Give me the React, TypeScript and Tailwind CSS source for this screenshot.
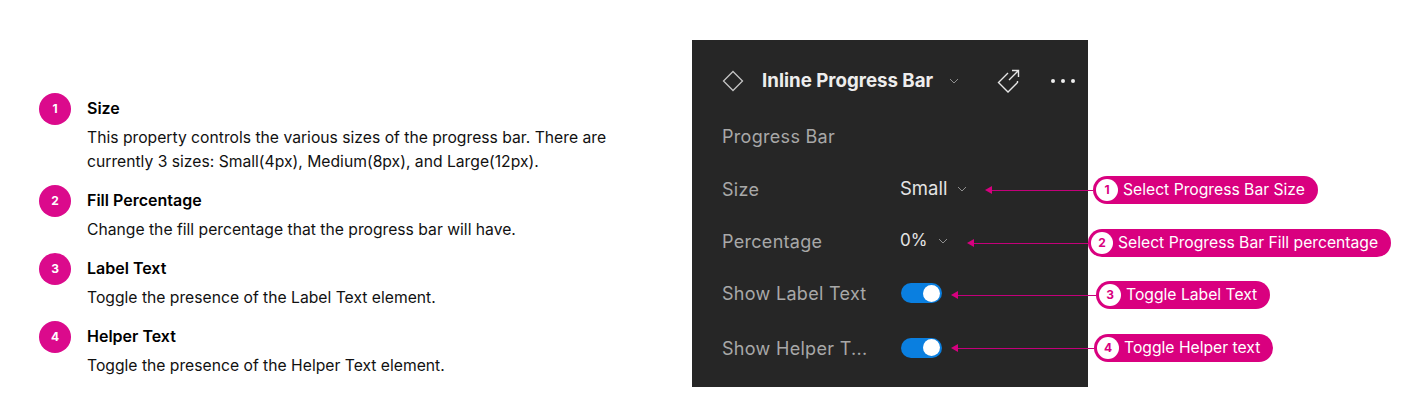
import React from "react";

const docs = [
  { n: 1, title: "Size", lines: ["This property controls the various sizes of the progress bar. There are", "currently 3 sizes: Small(4px), Medium(8px), and Large(12px)."], cls: "h-[92px]" },
  { n: 2, title: "Fill Percentage", lines: ["Change the fill percentage that the progress bar will have."], cls: "h-[68px]" },
  { n: 3, title: "Label Text", lines: ["Toggle the presence of the Label Text element."], cls: "h-[68px]" },
  { n: 4, title: "Helper Text", lines: ["Toggle the presence of the Helper Text element."], cls: "h-[68px]" },
];

const Chevron = ({ className }: { className: string }) => (
  <svg viewBox="0 0 10 6" className={className} fill="none" stroke="#8f8f8f" strokeWidth="1">
    <path d="M1 1l4 4 4-4" />
  </svg>
);

const Toggle = () => (
  <div className="ml-[1px] w-[41px] h-[20px] rounded-full bg-[#0a7fe0] flex items-center justify-end pr-[2px]">
    <div className="w-[17px] h-[17px] rounded-full bg-white" />
  </div>
);

const Row = ({ label, h, children }: { label: string; h: string; children: React.ReactNode }) => (
  <div className={`flex items-center ${h}`}>
    <div className="w-[178px] text-[#a8a8a8] tracking-[0.3px] text-[18px] pt-[1px]">{label}</div>
    {children}
  </div>
);

// one arrow + pill callout, hangs over the right edge of the panel
const Callout = ({ n, text, top, arrowLeft, lineW }: { n: number; text: string; top: string; arrowLeft: string; lineW: string }) => (
  <div className={`absolute left-0 flex items-center h-[28px] ${top}`}>
    <div className={`flex items-center ${arrowLeft} ${lineW}`}>
      <div className="w-0 h-0 border-y-[4px] border-y-transparent border-r-[7px] border-r-[#d6007f]" />
      <div className="flex-1 h-px bg-[#c4007a]" />
    </div>
    <div className="h-[28px] rounded-full bg-[#d9007f] flex items-center pl-[3px] pr-[13px] text-white text-[15.7px] whitespace-nowrap">
      <div className="w-[22px] h-[22px] rounded-full bg-white text-[#d9007f] text-[12px] font-bold flex items-center justify-center mr-[5px]">{n}</div>
      {text}
    </div>
  </div>
);

export default function App() {
  return (
    <div className="relative w-[1412px] h-[420px] bg-white overflow-hidden flex font-['Inter',sans-serif]">
      <div className="w-[692px] shrink-0 pl-[39px] pt-[93px]">
        {docs.map((d) => (
          <div key={d.n} className={`flex ${d.cls}`}>
            <div className="w-[32px] h-[32px] rounded-full bg-[#db0a8c] text-white text-[12px] font-bold flex items-center justify-center shrink-0">{d.n}</div>
            <div className="ml-[16px] text-[15.7px] leading-[24px] text-[#111] whitespace-nowrap">
              <div className="font-semibold text-[16px] text-black h-[33px] leading-[31px]">{d.title}</div>
              {d.lines.map((l) => (
                <div key={l}>{l}</div>
              ))}
            </div>
          </div>
        ))}
      </div>

      <div className="mt-[40px] w-[396px] h-[347px] bg-[#262626] pl-[30px]">
        <div className="flex items-center h-[82px]">
          <svg viewBox="0 0 22 22" className="w-[22px] h-[22px]" fill="none" stroke="#c4c4c4" strokeWidth="1.3">
            <path d="M11 1.5l9.5 9.5-9.5 9.5L1.500 11z" />
          </svg>
          <div className="ml-[18px] text-[#ededed] font-bold text-[18.7px] pt-[1px] whitespace-nowrap">Inline Progress Bar</div>
          <Chevron className="ml-[16px] w-[10px] h-[6px]" />
          <svg viewBox="0 0 26 26" className="ml-[37px] w-[26px] h-[26px]" fill="none" stroke="#e6e6e6" strokeWidth="1.4">
            <path d="M12 5L2.500 14.500 12 24l9.500-9.500V13" />
            <path d="M13 12l9-9M16 2.500h6.500V9" />
          </svg>
          <div className="ml-[29px] flex gap-[6px]">
            <span className="w-[4px] h-[4px] rounded-full bg-[#eee]" />
            <span className="w-[4px] h-[4px] rounded-full bg-[#eee]" />
            <span className="w-[4px] h-[4px] rounded-full bg-[#eee]" />
          </div>
        </div>
        <div className="h-[28px] flex items-center text-[#a8a8a8] tracking-[0.3px] text-[18px] pt-[1px]">Progress Bar</div>
        <div className="h-[13px]" />
        <Row label="Size" h="h-[52px]">
          <span className="text-[#e4e4e4] text-[18.5px]">Small</span>
          <Chevron className="ml-[10px] w-[10px] h-[6px]" />
        </Row>
        <Row label="Percentage" h="h-[52px]">
          <span className="text-[#e4e4e4] text-[17px]">0%</span>
          <Chevron className="ml-[11px] w-[10px] h-[6px]" />
        </Row>
        <Row label="Show Label Text" h="h-[52px]">
          <Toggle />
        </Row>
        <Row label="Show Helper T..." h="h-[57px]">
          <Toggle />
        </Row>
      </div>

      <Callout n={1} text="Select Progress Bar Size" top="top-[176px]" arrowLeft="ml-[985px]" lineW="w-[108px]" />
      <Callout n={2} text="Select Progress Bar Fill percentage" top="top-[229px]" arrowLeft="ml-[967px]" lineW="w-[121px]" />
      <Callout n={3} text="Toggle Label Text" top="top-[281px]" arrowLeft="ml-[951px]" lineW="w-[145px]" />
      <Callout n={4} text="Toggle Helper text" top="top-[334px]" arrowLeft="ml-[951px]" lineW="w-[143px]" />
    </div>
  );
}
